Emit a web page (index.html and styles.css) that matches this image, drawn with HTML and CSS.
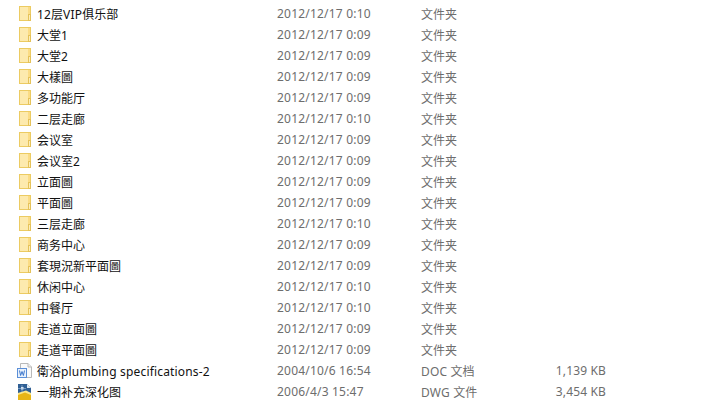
FILE: index.html
```html
<!DOCTYPE html>
<html lang="zh-CN">
<head>
  <meta charset="UTF-8" />
  <title>文件列表</title>
  <link rel="stylesheet" href="styles.css">
</head>
<body>
  <svg class="defs" width="0" height="0">
    <symbol id="folder" viewBox="0 0 12 15">
      <rect x="0.5" y="0.5" width="11" height="14" fill="#fde7a4" stroke="#eccb62"/>
      <rect x="1" y="1" width="8" height="13" fill="#fdeaae"/>
      <rect x="9" y="1" width="2" height="7" fill="#fbdc85"/>
      <rect x="9.5" y="8.5" width="2" height="6" fill="#fdeeb9" stroke="#e5c25a"/>
    </symbol>
  </svg>

  <div class="list">
    <div class="row"><svg class="icon"><use href="#folder"/></svg><span class="name"><span class="latin">12</span>层<span class="latin">VIP</span>俱乐部</span><span class="date">2012/12/17 0:10</span><span class="type">文件夹</span></div>
    <div class="row"><svg class="icon"><use href="#folder"/></svg><span class="name">大堂1</span><span class="date">2012/12/17 0:09</span><span class="type">文件夹</span></div>
    <div class="row"><svg class="icon"><use href="#folder"/></svg><span class="name">大堂2</span><span class="date">2012/12/17 0:09</span><span class="type">文件夹</span></div>
    <div class="row"><svg class="icon"><use href="#folder"/></svg><span class="name">大樣圖</span><span class="date">2012/12/17 0:09</span><span class="type">文件夹</span></div>
    <div class="row"><svg class="icon"><use href="#folder"/></svg><span class="name">多功能厅</span><span class="date">2012/12/17 0:09</span><span class="type">文件夹</span></div>
    <div class="row"><svg class="icon"><use href="#folder"/></svg><span class="name">二层走廊</span><span class="date">2012/12/17 0:10</span><span class="type">文件夹</span></div>
    <div class="row"><svg class="icon"><use href="#folder"/></svg><span class="name">会议室</span><span class="date">2012/12/17 0:09</span><span class="type">文件夹</span></div>
    <div class="row"><svg class="icon"><use href="#folder"/></svg><span class="name">会议室2</span><span class="date">2012/12/17 0:09</span><span class="type">文件夹</span></div>
    <div class="row"><svg class="icon"><use href="#folder"/></svg><span class="name">立面圖</span><span class="date">2012/12/17 0:09</span><span class="type">文件夹</span></div>
    <div class="row"><svg class="icon"><use href="#folder"/></svg><span class="name">平面圖</span><span class="date">2012/12/17 0:09</span><span class="type">文件夹</span></div>
    <div class="row"><svg class="icon"><use href="#folder"/></svg><span class="name">三层走廊</span><span class="date">2012/12/17 0:10</span><span class="type">文件夹</span></div>
    <div class="row"><svg class="icon"><use href="#folder"/></svg><span class="name">商务中心</span><span class="date">2012/12/17 0:09</span><span class="type">文件夹</span></div>
    <div class="row"><svg class="icon"><use href="#folder"/></svg><span class="name">套現況新平面圖</span><span class="date">2012/12/17 0:09</span><span class="type">文件夹</span></div>
    <div class="row"><svg class="icon"><use href="#folder"/></svg><span class="name">休闲中心</span><span class="date">2012/12/17 0:10</span><span class="type">文件夹</span></div>
    <div class="row"><svg class="icon"><use href="#folder"/></svg><span class="name">中餐厅</span><span class="date">2012/12/17 0:10</span><span class="type">文件夹</span></div>
    <div class="row"><svg class="icon"><use href="#folder"/></svg><span class="name">走道立面圖</span><span class="date">2012/12/17 0:09</span><span class="type">文件夹</span></div>
    <div class="row"><svg class="icon"><use href="#folder"/></svg><span class="name">走道平面圖</span><span class="date">2012/12/17 0:09</span><span class="type">文件夹</span></div>
    <div class="row">
      <svg class="icon icon-file" viewBox="0 0 16 16">
        <path d="M3.5 0.5H11L14.5 4V14.5H3.5Z" fill="#fafafa" stroke="#b9b9b9"/>
        <path d="M11 0.5V4H14.5" fill="#eee" stroke="#b9b9b9"/>
        <rect x="0.5" y="5.5" width="9" height="9" fill="#e8f1fc" stroke="#5b8fd8"/>
        <path d="M2.5 7.5L3.6 12.5L5 8.5L6.4 12.5L7.5 7.5" fill="none" stroke="#3f78cc"/>
      </svg>
      <span class="name">衛浴<span class="latin">plumbing specifications-2</span></span><span class="date">2004/10/6 16:54</span><span class="type"><span class="latin">DOC </span>文档</span><span class="size">1,139 KB</span>
    </div>
    <div class="row">
      <svg class="icon icon-file" viewBox="0 0 16 16">
        <path d="M1 0H10L14 4V10H1Z" fill="#2f5f94"/>
        <path d="M10 0L14 4H10Z" fill="#dfe8f2"/>
        <path d="M1 9L9 6.5L14 9V16H1Z" fill="#fbe78a"/>
        <path d="M1 11L8 8.5L14 11V16H1Z" fill="#e8b516"/>
        <rect x="4" y="3" width="2.5" height="2.5" fill="#e8f0f8"/>
        <path d="M1 4.5H9M5 1V8" stroke="#a9c3de" stroke-width="0.6"/>
      </svg>
      <span class="name">一期补充深化图</span><span class="date">2006/4/3 15:47</span><span class="type"><span class="latin">DWG </span>文件</span><span class="size">3,454 KB</span>
    </div>
  </div>
</body>
</html>
```

FILE: styles.css
```css
body {
  margin: 0;
  background: white;
  color: #6d6d6d;
  font-family: "Noto Sans", "Noto Sans CJK SC", sans-serif;
  font-size: 12px;
  overflow: hidden;
}
.defs {
  display: none;
}
.list {
  padding: 3px 0 0 19px;
}
.row {
  display: flex;
  align-items: center;
  height: 21px;
  white-space: nowrap;
}
.icon {
  width: 12px;
  height: 15px;
  margin-right: 6px;
  flex: none;
}
.icon-file {
  width: 16px;
  height: 16px;
  margin-left: -2px;
  margin-right: 4px;
}
.name {
  width: 240px;
  color: #111;
}
.latin {
  letter-spacing: 0.17px;
}
.date {
  width: 144px;
  letter-spacing: 0.2px;
}
.type {
  width: 100px;
}
.size {
  width: 85px;
  text-align: right;
  letter-spacing: 0.15px;
}
```
